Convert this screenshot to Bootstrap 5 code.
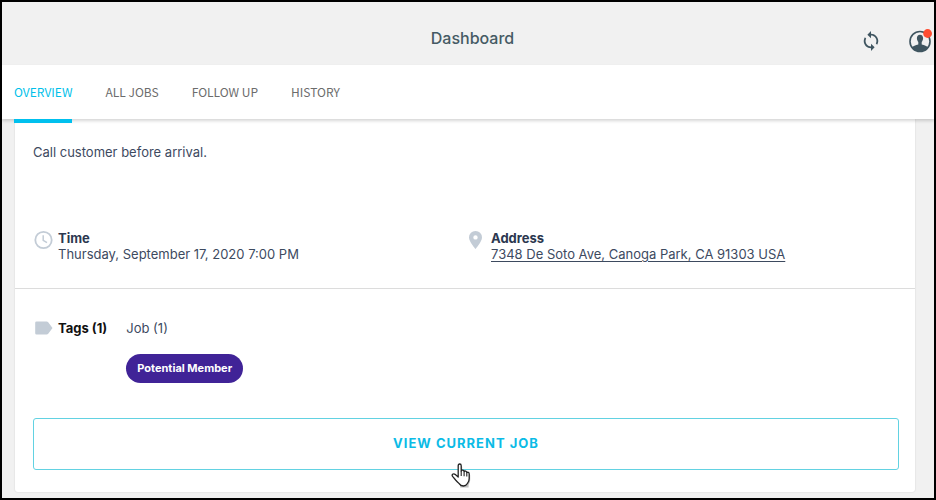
<!DOCTYPE html>
<html lang="en">
<head>
<meta charset="utf-8">
<meta name="viewport" content="width=device-width, initial-scale=1">
<title>Dashboard</title>
<link href="https://cdn.jsdelivr.net/npm/bootstrap@5.3.0/dist/css/bootstrap.min.css" rel="stylesheet">
<style>
body { font-family: Inter, "Liberation Sans", sans-serif; font-size: 13px; line-height: 16px; color: #3d4a5f; }
.app-frame { background: #f1f1f1; border: 2px solid #000; }
.top-bar { height: 63px; padding: 9px 2px 0 11px; }
.top-bar h1 { font-size: 16px; line-height: 20px; font-weight: 500; color: #455a64; }
.top-actions { gap: 28px; padding-top: 5px; color: #3f5560; }
.tab-bar { height: 54px; padding: 0 12px; gap: 33px; box-shadow: 0 2px 3px rgba(0,0,0,.16); font-family: "Noto Sans CJK JP", sans-serif; z-index: 2; }
.tab-bar .nav-link { height: 58px; padding: 18px 0 0; font-size: 12px; line-height: 18px; color: #6c6c6c; border-bottom: 4px solid transparent; }
.tab-bar .nav-link.active { color: #00bfea; border-bottom-color: #00c0ee; }
.job-card { margin: 0 19px 6px 13px; padding-top: 25px; border-radius: 0 0 3px 3px; box-shadow: 0 0 2px rgba(0,0,0,.14); }
.section { padding: 0 16px 0 18px; }
.details { margin-top: 70px; padding-bottom: 26px; border-bottom: 1px solid #dcdcdc; }
.details h2, .tags h2 { font-size: 13px; line-height: 16px; font-weight: 700; color: #2c3850; margin: 0; }
.details a { color: inherit; text-underline-offset: 2px; }
.glyph { width: 25px; color: #c3ccd6; flex: none; }
.tags { padding-top: 31px; }
.tags h2 { color: #111; }
.tag-group { margin-left: 19px; }
.tag-pill { margin-top: 18px; padding: 9px 11px; font-size: 11px; line-height: 11px; font-weight: 700; background: #402397; }
.view-btn { margin-top: 35px; height: 52px; border: 1px solid #62d2e2; border-radius: 3px; color: #0bbbe6; font-size: 13px; font-weight: 700; letter-spacing: 1px; background: #fff; }
.view-btn:hover { color: #0bbbe6; border-color: #62d2e2; background: #fff; }
.action { padding-bottom: 22px; }
.pointer { left: calc(50% - 14px); bottom: 2px; pointer-events: none; }
svg { display: block; }
</style>
</head>
<body>
<div class="app-frame min-vh-100">
  <header class="top-bar row g-0 align-items-center">
    <div class="col"></div>
    <h1 class="col-auto m-0">Dashboard</h1>
    <div class="top-actions col d-flex justify-content-end align-items-center">
      <button class="btn p-0 border-0" type="button" aria-label="Refresh">
        <svg width="18" height="20" viewBox="3 1 18 22" fill="#3f5560"><path d="M12 4V1L8 5l4 4V6c3.310 0 6 2.690 6 6 0 1.010-.25 1.970-.7 2.800l1.460 1.460C19.540 15.030 20 13.570 20 12c0-4.420-3.580-8-8-8zm0 14c-3.310 0-6-2.690-6-6 0-1.010.25-1.970.7-2.800L5.240 7.740C4.460 8.970 4 10.430 4 12c0 4.420 3.580 8 8 8v3l4-4-4-4v3z"/></svg>
      </button>
      <button class="btn p-0 border-0" type="button" aria-label="Account">
        <svg width="24" height="24" viewBox="0 0 24 24"><circle cx="12" cy="12.500" r="10" fill="#f1f1f1" stroke="#3f5560" stroke-width="1.600"/><path d="M12 5.700c-2 0-3.200 1.500-3.100 3.600.1 1.600.6 2.800 1.400 3.700v2.400c-2.700.7-5.300 1.300-6.400 3A10.300 10.300 0 0 0 12 22.500a10.300 10.300 0 0 0 8.100-4.100c-1.100-1.700-3.700-2.300-6.400-3v-2.400c.8-.9 1.300-2.100 1.400-3.700.1-2.100-1.100-3.600-3.100-3.600z" fill="#3f5560"/><circle cx="19.600" cy="4.500" r="4.400" fill="#ff4d32"/></svg>
      </button>
    </div>
  </header>
  <nav class="tab-bar nav flex-nowrap bg-white position-relative" aria-label="Jobs">
    <a class="nav-link active" aria-current="page" href="#">OVERVIEW</a>
    <a class="nav-link" href="#">ALL JOBS</a>
    <a class="nav-link" href="#">FOLLOW UP</a>
    <a class="nav-link" href="#">HISTORY</a>
  </nav>
  <main class="job-card bg-white">
    <p class="section m-0">Call customer before arrival.</p>
    <div class="details section row mx-0">
      <section class="col-6 d-flex p-0">
        <div class="glyph"><svg width="20" height="20" viewBox="0 0 20 20" fill="none" stroke="currentColor" stroke-width="1.800"><circle cx="10.500" cy="10" r="8.200"/><path d="M10.200 5.300v5l3.800 2.400" stroke-width="1.500"/></svg></div>
        <div><h2>Time</h2>Thursday, September 17, 2020 7:00 PM</div>
      </section>
      <section class="col-6 d-flex p-0">
        <div class="glyph"><svg width="20" height="20" viewBox="0 0 20 20" fill="currentColor"><path fill-rule="evenodd" d="M9.500 1A6.400 6.400 0 0 0 3 7.400C3 11.500 9.500 19 9.500 19S16 11.500 16 7.400A6.400 6.400 0 0 0 9.500 1zm0 4.200a2.200 2.200 0 1 1 0 4.400 2.200 2.200 0 0 1 0-4.400z"/></svg></div>
        <div><h2>Address</h2><a href="#">7348 De Soto Ave, Canoga Park, CA 91303 USA</a></div>
      </section>
    </div>
    <section class="tags section d-flex">
      <div class="glyph"><svg width="20" height="16" viewBox="0 0 20 16" fill="currentColor"><path d="M3.500 1.500h10.100q1 0 1.600.8L19.500 8l-4.300 5.700q-.6.800-1.600.8H3.500q-1.300 0-1.300-1.300V2.800q0-1.300 1.300-1.300z"/></svg></div>
      <h2>Tags (1)</h2>
      <div class="tag-group">
        <div>Job (1)</div>
        <span class="tag-pill badge rounded-pill">Potential Member</span>
      </div>
    </section>
    <div class="action section position-relative">
      <button class="view-btn btn w-100 d-block" type="button">VIEW CURRENT JOB</button>
      <svg class="pointer position-absolute" width="22" height="28" viewBox="0 0 22 28" aria-hidden="true"><path d="M7.200 16V3.700Q7.200 2 8.700 2t1.500 1.700V9q.4-1 1.600-.8 1.200.1 1.300 1.300.5-.7 1.600-.4 1 .2 1.100 1.400.6-.5 1.500-.1.900.4.9 1.600v4.500q0 2.600-1.600 4.700V24H8.200v-2.400Q6 19.500 4.600 17l-2-2.600q-.7-1.300.2-2 1.200-.8 2.300.5z" fill="rgba(0,0,0,.25)" transform="translate(1 1.500)"/><path d="M7.200 15V3.700Q7.200 2 8.700 2t1.500 1.700V9q.4-1 1.600-.8 1.200.1 1.300 1.300.5-.7 1.600-.4 1 .2 1.100 1.400.6-.5 1.500-.1.900.4.900 1.600v4.500q0 2.600-1.600 4.700Q15 24 12.400 24 9.500 24 8.200 21.600 6 19.500 4.600 18l-3-3.600q-.9-1.300 0-2.200 1.300-.9 2.700.3z" fill="#fff" stroke="#222" stroke-width="1.300" stroke-linejoin="round"/><path d="M10.200 9v5M13.100 9.500v4.700M15.800 10.500v4" stroke="#222" stroke-width="1.100"/></svg>
    </div>
  </main>
</div>
<script src="https://cdn.jsdelivr.net/npm/bootstrap@5.3.0/dist/js/bootstrap.bundle.min.js"></script>
</body>
</html>
